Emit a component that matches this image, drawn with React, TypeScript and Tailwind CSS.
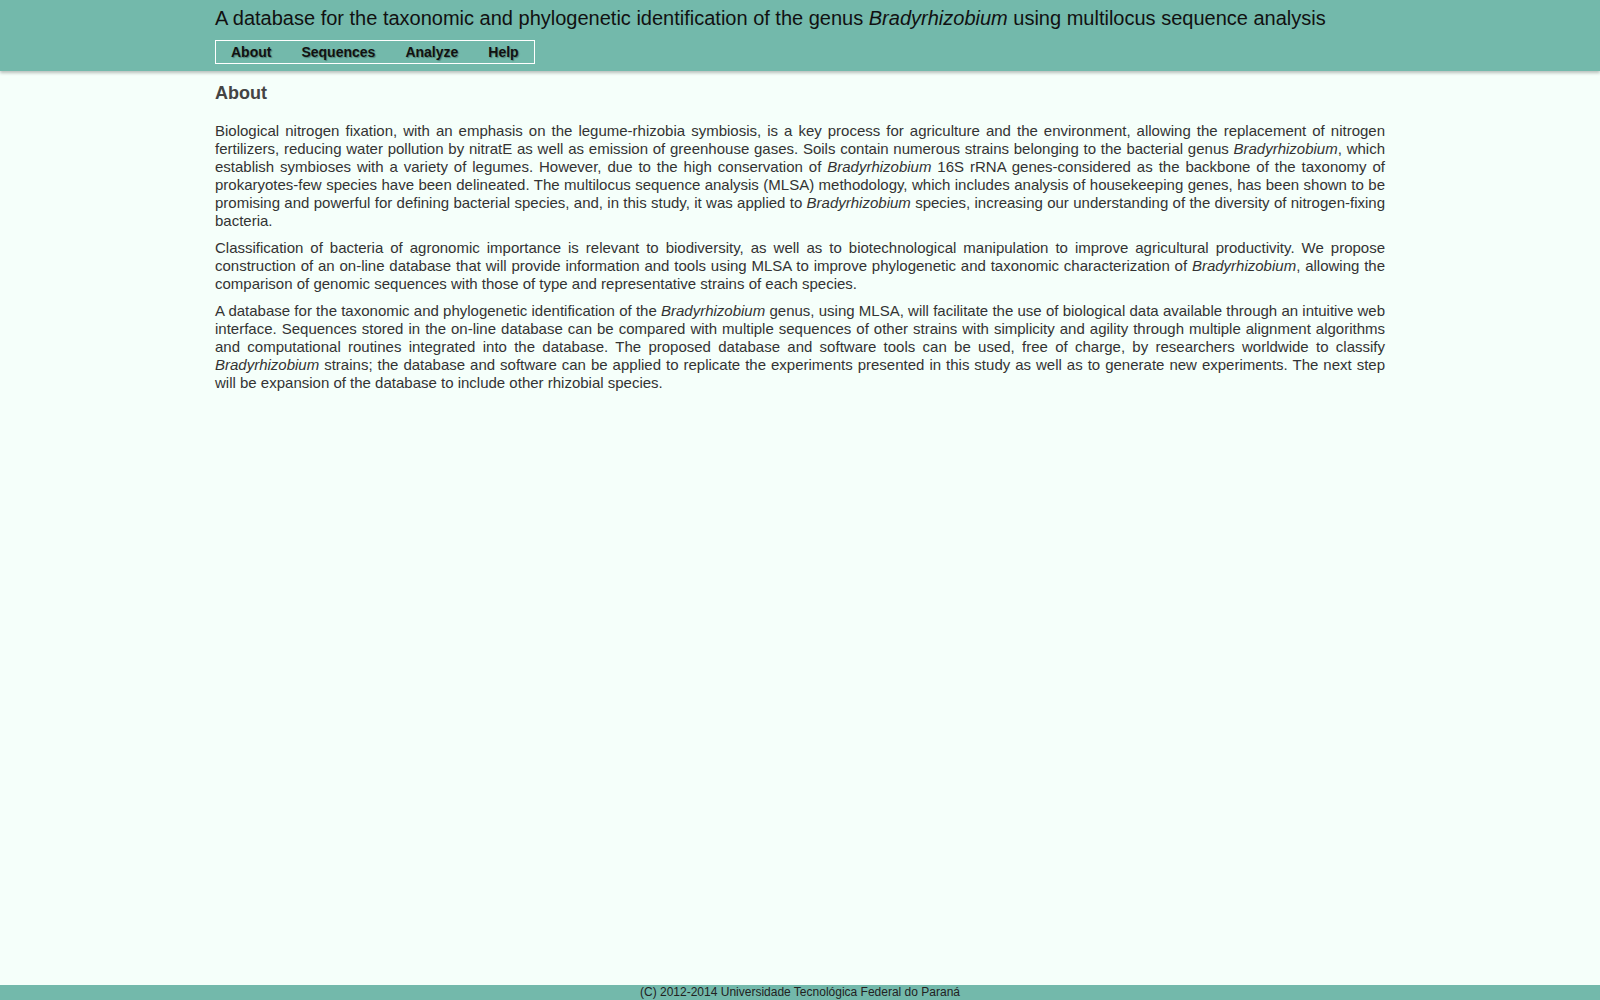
import React from 'react';

const navItems = ['About', 'Sequences', 'Analyze', 'Help'];

const Brady: React.FC = () => <i>Bradyrhizobium</i>;

const App: React.FC = () => {
  return (
    <div className="min-h-screen flex flex-col bg-[#f5fffa] font-['Liberation_Sans',Arial,sans-serif]">
      {/* Header */}
      <header className="bg-[#73b9ab] shadow-[0_2px_3px_rgba(0,0,0,0.25)] h-[71px]">
        <div className="w-[1170px] mx-auto pt-[7px]">
          <h1 className="text-[20px] leading-[23px] text-[#111]">
            A database for the taxonomic and phylogenetic identification of the genus <Brady /> using multilocus sequence analysis
          </h1>
          <nav className="mt-[10px] inline-flex border border-white h-[24px] items-center">
            {navItems.map((item) => (
              <a
                key={item}
                href="#"
                className="px-[15px] text-[14px] font-bold text-[#111] [text-shadow:1px_1px_1px_rgba(0,0,0,0.3)]"
              >
                {item}
              </a>
            ))}
          </nav>
        </div>
      </header>

      {/* Content */}
      <main className="flex-1 w-[1170px] mx-auto pt-[12px] text-[#333]">
        <h2 className="text-[18px] leading-[21px] font-bold text-[#444]">About</h2>
        <div className="mt-[18px] text-[15px] leading-[18px] text-justify">
          <p className="mb-[9px]">
            Biological nitrogen fixation, with an emphasis on the legume-rhizobia symbiosis, is a key process for agriculture and the environment, allowing the replacement of nitrogen fertilizers, reducing water pollution by nitratE as well as emission of greenhouse gases. Soils contain numerous strains belonging to the bacterial genus <Brady />, which establish symbioses with a variety of legumes. However, due to the high conservation of <Brady /> 16S rRNA genes-considered as the backbone of the taxonomy of prokaryotes-few species have been delineated. The multilocus sequence analysis (MLSA) methodology, which includes analysis of housekeeping genes, has been shown to be promising and powerful for defining bacterial species, and, in this study, it was applied to <Brady /> species, increasing our understanding of the diversity of nitrogen-fixing bacteria.
          </p>
          <p className="mb-[9px]">
            Classification of bacteria of agronomic importance is relevant to biodiversity, as well as to biotechnological manipulation to improve agricultural productivity. We propose construction of an on-line database that will provide information and tools using MLSA to improve phylogenetic and taxonomic characterization of <Brady />, allowing the comparison of genomic sequences with those of type and representative strains of each species.
          </p>
          <p className="mb-[9px]">
            A database for the taxonomic and phylogenetic identification of the <Brady /> genus, using MLSA, will facilitate the use of biological data available through an intuitive web interface. Sequences stored in the on-line database can be compared with multiple sequences of other strains with simplicity and agility through multiple alignment algorithms and computational routines integrated into the database. The proposed database and software tools can be used, free of charge, by researchers worldwide to classify <Brady /> strains; the database and software can be applied to replicate the experiments presented in this study as well as to generate new experiments. The next step will be expansion of the database to include other rhizobial species.
          </p>
        </div>
      </main>

      {/* Footer */}
      <footer className="bg-[#73b9ab] h-[15px] text-center text-[12px] leading-[15px] text-[#222]">
        (C) 2012-2014 Universidade Tecnológica Federal do Paraná
      </footer>
    </div>
  );
};

export default App;
